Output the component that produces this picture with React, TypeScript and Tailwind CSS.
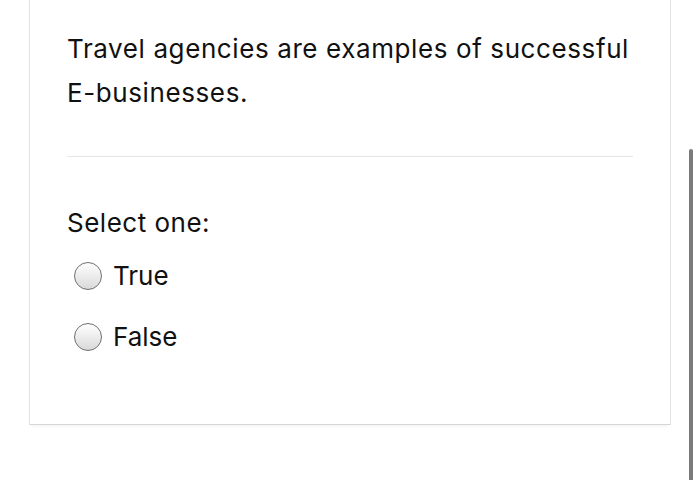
import React from 'react';

const options = ['True', 'False'];

const Radio = () => (
  <span className="box-border h-[28px] w-[28px] shrink-0 rounded-full border-[1.5px] border-[#6f6f6f] bg-gradient-to-b from-white to-[#d9d9d9]" />
);

const App = () => {
  return (
    <div className="relative h-[480px] w-[700px] overflow-hidden bg-white font-['Inter','Liberation_Sans',sans-serif] text-[#111]">
      <div className="ml-[29px] w-[642px] border-x border-b border-x-[#e2e2e2] border-b-[#d6d6d6] bg-white px-[37px] pb-[57px] pt-[27px] shadow-[0_5px_2px_-3px_rgba(0,0,0,0.04)]">
        <p className="text-[26px] leading-[44px] tracking-[0.6px]">
          Travel agencies are examples of successful
          <br />
          E-businesses.
        </p>
        <div className="mt-[41px] h-px bg-[#e6e6e6]" />
        <p className="mt-[44px] text-[26px] leading-[44px] tracking-[0.5px]">Select one:</p>
        <div className="flex flex-col">
          {options.map(opt => (
            <label key={opt} className="flex h-[61px] items-center gap-[11px] pl-[7px] text-[26px]">
              <Radio />
              <span>{opt}</span>
            </label>
          ))}
        </div>
      </div>
      <div className="absolute left-[689px] top-[149px] h-[340px] w-[4px] rounded-full bg-[#7b7b7b]" />
    </div>
  );
};

export default App;
